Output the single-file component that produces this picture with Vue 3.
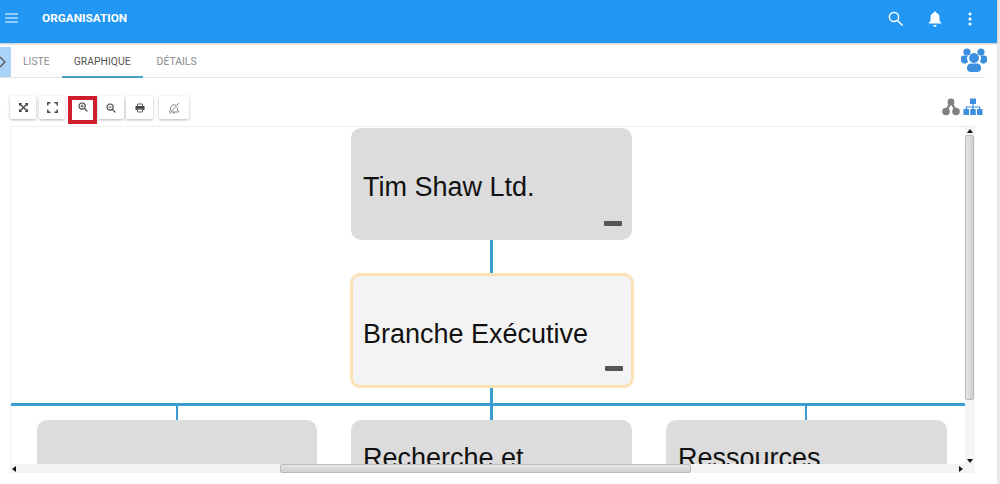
<script setup>
const tabs = [
  { label: 'LISTE', active: false },
  { label: 'GRAPHIQUE', active: true },
  { label: 'DÉTAILS', active: false }
]
const nodes = [
  { id: 1, cls: 'n1', text: 'Tim Shaw Ltd.', minus: true },
  { id: 2, cls: 'n2', text: 'Branche Exécutive', minus: true },
  { id: 3, cls: 'n3', text: '', minus: false },
  { id: 4, cls: 'n4', text: 'Recherche et', minus: false },
  { id: 5, cls: 'n5', text: 'Ressources', minus: false }
]
const lines = ['l1', 'l2', 'l3', 'l4', 'l5', 'l6']
</script>

<template>
  <div class="page">
    <div class="edge"></div>
    <header class="appbar">
      <svg class="menu" width="16" height="12" viewBox="0 0 16 12"><path d="M1 2h13M1 6h13M1 10h13" stroke="#fff" stroke-width="1.200" fill="none"/></svg>
      <span class="title">ORGANISATION</span>
      <svg class="search" width="18" height="18" viewBox="0 0 18 18"><circle cx="7" cy="7" r="4.600" stroke="#fff" stroke-width="1.500" fill="none"/><path d="M10.500 10.500l5 5" stroke="#fff" stroke-width="1.600"/></svg>
      <svg class="bell" width="18" height="18" viewBox="0 0 18 18"><path d="M9 1.500c.8 0 1.300.6 1.300 1.300 2.200.6 3.200 2.400 3.200 4.700v3.600l1.700 1.700v.8H2.800v-.8l1.700-1.700V7.500c0-2.300 1-4.100 3.200-4.700 0-.7.500-1.300 1.300-1.300zM7.300 15h3.400c0 1-.8 1.800-1.700 1.800S7.300 16 7.300 15z" fill="#fff"/></svg>
      <svg class="dots" width="6" height="14" viewBox="0 0 6 14"><circle cx="3" cy="2" r="1.500" fill="#fff"/><circle cx="3" cy="7" r="1.500" fill="#fff"/><circle cx="3" cy="12" r="1.500" fill="#fff"/></svg>
    </header>

    <nav class="tabbar">
      <div class="drawer">
        <svg width="6" height="12" viewBox="0 0 6 12"><path d="M0 1l5 5-5 5" stroke="#555" stroke-width="1.300" fill="none"/></svg>
      </div>
      <div class="tabs">
        <div v-for="t in tabs" :key="t.label" class="tab" :class="{ active: t.active }">{{ t.label }}</div>
      </div>
      <svg class="people" width="26" height="24" viewBox="0 0 26 24" fill="#3c8fe0">
        <circle cx="6" cy="4" r="3.600"/><circle cx="20" cy="4" r="3.600"/>
        <path d="M0 10c0-1.500 1-2.500 2.500-2.500H7C6.200 8.500 6 9.500 6 10.500c0 1.300.4 2.500 1.200 3.500-1.100.4-2 1-2.700 1.800C2 15.500 0 14.500 0 13zM26 10c0-1.500-1-2.500-2.500-2.500H19c.8 1 1 2 1 3 0 1.300-.4 2.500-1.200 3.500 1.100.4 2 1 2.700 1.800 2.500-.3 4.500-1.300 4.500-2.800z"/>
        <circle cx="13" cy="10" r="4.900"/>
        <path d="M6 19.500c0-2.500 2-4 4-4h6c2 0 4 1.500 4 4V21c0 1.800-2 3-4 3h-6c-2 0-4-1.200-4-3z"/>
      </svg>
    </nav>

    <div class="toolbar">
      <button class="tool">
        <svg width="9" height="9" viewBox="0 0 10 10"><path d="M1 1l8 8M9 1l-8 8" stroke="#444" stroke-width="1.500"/><path d="M0 0h3.500L0 3.500zM10 0v3.500L6.500 0zM0 10V6.500L3.500 10zM10 10H6.500L10 6.500z" fill="#444"/></svg>
      </button>
      <button class="tool">
        <svg width="11" height="11" viewBox="0 0 11 11"><path d="M.8 3.500V.8h2.700M7.500.8h2.700v2.700M10.200 7.500v2.700H7.500M3.500 10.200H.8V7.500" stroke="#444" stroke-width="1.400" fill="none"/></svg>
      </button>
      <button class="tool zoomed">
        <svg width="10" height="10" viewBox="0 0 11 11"><circle cx="4.500" cy="4.500" r="3.400" stroke="#444" stroke-width="1.300" fill="none"/><path d="M7 7l3.300 3.300" stroke="#444" stroke-width="1.500"/><path d="M2.800 4.500h3.400M4.500 2.800v3.400" stroke="#444"/></svg>
      </button>
      <button class="tool">
        <svg width="10" height="10" viewBox="0 0 11 11"><circle cx="4.500" cy="4.500" r="3.400" stroke="#444" stroke-width="1.300" fill="none"/><path d="M7 7l3.300 3.300" stroke="#444" stroke-width="1.500"/><path d="M2.800 4.500h3.400" stroke="#444"/></svg>
      </button>
      <button class="tool printer">
        <svg width="10" height="10" viewBox="0 0 12 11"><path d="M3 3V.7h6V3" stroke="#444" fill="none"/><path d="M.5 4.200c0-.6.400-1 1-1h9c.6 0 1 .4 1 1V8H9.500V6.500h-7V8H.5z" fill="#444"/><path d="M3 7h6v3.300H3z" stroke="#444" fill="none"/></svg>
      </button>
      <button class="tool muted">
        <svg width="12" height="12" viewBox="0 0 12 12"><path d="M1 10c1.200-.8 1.500-1.500 1.500-3.200C2.500 4.500 4 2.800 6 2.800c.8 0 1.500.2 2 .7M9.200 5c.2.600.3 1.200.3 1.800 0 1.700.4 2.400 1.500 3.200H3.500M5 11h2M11 1L1.500 11.500" stroke="#777" stroke-width=".9" fill="none"/></svg>
      </button>
      <div class="spacer"></div>
      <svg class="view" width="18" height="18" viewBox="0 0 18 18"><path d="M9 4L4 13M9 4l5 9" stroke="#808080" stroke-width="2.400"/><circle cx="9" cy="4" r="3.400" fill="#808080"/><circle cx="4" cy="13.500" r="3.800" fill="#808080"/><circle cx="14" cy="13.500" r="3.800" fill="#808080"/></svg>
      <svg class="view" width="20" height="18" viewBox="0 0 20 18" fill="#3c8fe0"><rect x="7" y="0.500" width="6" height="5.500" rx=".6"/><rect x="0.500" y="11" width="5.500" height="6" rx=".6"/><rect x="7.250" y="11" width="5.500" height="6" rx=".6"/><rect x="14" y="11" width="5.500" height="6" rx=".6"/><path d="M9.400 6h1.200v2.400h6.600V11H16V9.500h-5.400V11H9.400V9.500H4V11H2.800V8.400h6.600z"/></svg>
    </div>

    <section class="chart">
      <div class="canvas">
        <div v-for="l in lines" :key="l" class="line" :class="l"></div>
        <div v-for="n in nodes" :key="n.id" class="node" :class="n.cls">
          <span class="label">{{ n.text }}</span>
          <i v-if="n.minus" class="minus"></i>
        </div>
      </div>
      <div class="vbar">
        <span class="arrow up"></span>
        <span class="vthumb"></span>
        <span class="arrow down"></span>
      </div>
      <div class="hbar">
        <span class="arrow left"></span>
        <span class="hthumb"></span>
        <span class="arrow right"></span>
      </div>
      <div class="corner"></div>
    </section>
  </div>
</template>

<style>
html, body { margin: 0; background: #fff; overflow: hidden; }
</style>

<style scoped>
.page {
  position: relative;
  width: 1000px;
  height: 484px;
  overflow: hidden;
  background: #fff;
  font-family: Roboto, "Liberation Sans", sans-serif;
}
.edge {
  position: absolute;
  top: 0;
  right: 0;
  width: 3px;
  height: 484px;
  background: #e9e9e9;
}
.appbar {
  height: 43px;
  width: 997px;
  background: #2196f3;
  display: flex;
  align-items: center;
  color: #fff;
  box-shadow: 0 1px 2px rgba(0, 0, 0, .25);
  position: relative;
}
.menu { margin-left: 4px; margin-top: -7px; }
.title {
  margin-left: 22px;
  margin-top: -7px;
  font-size: 11.8px;
  font-weight: 700;
}
.search { margin-left: auto; margin-top: -6px; margin-right: 21px; }
.bell { margin-right: 23px; margin-top: -6px; }
.dots { margin-right: 24px; margin-top: -6px; }
.tabbar {
  height: 33px;
  width: 985px;
  margin-top: 1px;
  border-bottom: 1px solid #e4e4e4;
  display: flex;
  align-items: flex-start;
  position: relative;
}
.drawer {
  width: 11px;
  height: 30px;
  margin-top: 3px;
  background: #a9d4f7;
  display: flex;
  align-items: center;
  justify-content: flex-start;
}
.tabs { display: flex; margin-left: 1px; height: 34px; }
.tab {
  padding: 0 12px 0 11px;
  height: 33px;
  line-height: 35px;
  font-size: 10.4px;
  color: #8a8a8a;
  text-align: center;
}
.tab.active {
  color: #555;
  border-bottom: 2px solid #4a9cc9;
  height: 32px;
  padding: 0 12px;
  margin-right: 3px;
}
.people { position: absolute; right: -2px; top: 4px; }
.toolbar {
  height: 23px;
  width: 985px;
  margin-top: 18px;
  padding-left: 10px;
  box-sizing: border-box;
  display: flex;
  align-items: center;
  gap: 3px;
}
.tool {
  width: 26px;
  height: 23px;
  padding: 0;
  border: 0;
  border-radius: 2px;
  background: #fff;
  box-shadow: 0 1px 3px rgba(0, 0, 0, .28);
  display: flex;
  align-items: center;
  justify-content: center;
}
.printer { width: 27px; margin-left: -1px; }
.muted { width: 30px; margin-left: 3px; }
.zoomed {
  width: 21px;
  height: 20px;
  box-sizing: border-box;
  padding-bottom: 6px;
  outline: 4px solid #d01f2c;
  outline-offset: 0;
  border-radius: 0;
  box-shadow: none;
  margin: 5px 2px 0 4px;
}
.spacer { flex: 1; }
.view { flex: none; margin-top: -1px; }
.view + .view { margin-right: 2px; }
.chart {
  position: absolute;
  left: 10px;
  top: 126px;
  width: 965px;
  height: 347px;
  border-top: 1px solid #eee;
  border-left: 1px solid #f2f2f2;
  box-sizing: border-box;
  overflow: hidden;
}
.canvas {
  position: absolute;
  left: 0;
  top: 0;
  width: 954px;
  height: 337px;
  overflow: hidden;
}
.node {
  position: absolute;
  box-sizing: border-box;
  background: #dcdcdc;
  border-radius: 10px;
  font-family: "Liberation Sans", Arial, sans-serif;
  font-size: 27px;
  color: #111;
  display: flex;
  align-items: center;
  padding-left: 12px;
  padding-top: 7px;
}
.n1 { left: 340px; top: 1px; width: 281px; height: 112px; }
.n2 {
  left: 339px;
  top: 146px;
  width: 284px;
  height: 115px;
  background: #f3f3f4;
  border: 3px solid #fbe2b4;
  padding-left: 10px;
}
.n3 { left: 26px; top: 293px; width: 280px; height: 112px; }
.n4 { left: 340px; top: 293px; width: 281px; height: 112px; align-items: flex-start; padding-top: 23px; }
.n5 { left: 655px; top: 293px; width: 281px; height: 112px; align-items: flex-start; padding-top: 23px; }
.minus {
  position: absolute;
  right: 10px;
  bottom: 14px;
  width: 18px;
  height: 5px;
  background: #555;
  border-radius: 1px;
}
.n2 .minus { right: 8px; bottom: 14px; }
.line { position: absolute; background: #3a9bd0; }
.l1 { left: 479px; top: 113px; width: 3px; height: 34px; }
.l2 { left: 479px; top: 260px; width: 3px; height: 17px; }
.l3 { left: 0; top: 276px; width: 954px; height: 3px; }
.l4 { left: 165px; top: 278px; width: 2px; height: 16px; }
.l5 { left: 479px; top: 278px; width: 3px; height: 16px; }
.l6 { left: 794px; top: 278px; width: 2px; height: 16px; }
.vbar {
  position: absolute;
  left: 954px;
  top: 0;
  width: 10px;
  height: 337px;
  background: #f4f4f4;
}
.vthumb {
  position: absolute;
  left: 0;
  top: 8px;
  width: 9px;
  height: 265px;
  background: linear-gradient(90deg, #e6e6e6, #cfcfcf);
  border: 1px solid #bbb;
  border-radius: 2px;
  box-sizing: border-box;
}
.hbar {
  position: absolute;
  left: 0;
  top: 337px;
  width: 954px;
  height: 9px;
  background: #f4f4f4;
}
.hthumb {
  position: absolute;
  left: 269px;
  top: 0;
  width: 411px;
  height: 9px;
  background: linear-gradient(180deg, #e6e6e6, #cfcfcf);
  border: 1px solid #bbb;
  border-radius: 2px;
  box-sizing: border-box;
}
.corner {
  position: absolute;
  left: 954px;
  top: 337px;
  width: 10px;
  height: 9px;
  background: #f4f4f4;
}
.arrow { position: absolute; width: 0; height: 0; border-style: solid; border-color: transparent; }
.up { left: 2px; top: 2px; border-width: 0 3px 4px; border-bottom-color: #111; }
.down { left: 2px; bottom: 1px; border-width: 4px 3px 0; border-top-color: #111; }
.left { left: 1px; top: 2px; border-width: 3px 4px 3px 0; border-right-color: #111; }
.right { right: 2px; top: 2px; border-width: 3px 0 3px 4px; border-left-color: #111; }
</style>
